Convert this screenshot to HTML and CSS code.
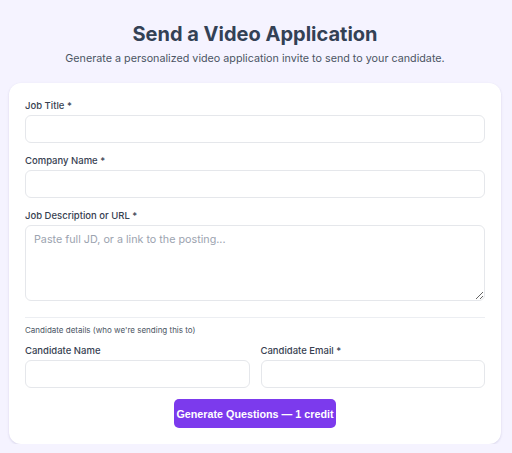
FILE: index.html
```html
<!DOCTYPE html>
<html lang="en">
<head>
<meta charset="utf-8">
<title>Send a Video Application</title>
<link rel="stylesheet" href="styles.css">
</head>
<body>
<main class="page">
  <header class="head">
    <h1 class="title">Send a Video Application</h1>
    <p class="subtitle">Generate a personalized video application invite to send to your candidate.</p>
  </header>
  <form class="card">
    <div class="field">
      <label class="label" for="jt">Job Title *</label>
      <input class="input" id="jt" type="text">
    </div>
    <div class="field">
      <label class="label" for="cn">Company Name *</label>
      <input class="input" id="cn" type="text">
    </div>
    <div class="field">
      <label class="label" for="jd">Job Description or URL *</label>
      <textarea class="input area" id="jd" placeholder="Paste full JD, or a link to the posting..."></textarea>
    </div>
    <hr class="divider">
    <p class="section-note">Candidate details (who we're sending this to)</p>
    <div class="row">
      <div class="field">
        <label class="label" for="cand">Candidate Name</label>
        <input class="input" id="cand" type="text">
      </div>
      <div class="field">
        <label class="label" for="ce">Candidate Email *</label>
        <input class="input" id="ce" type="email">
      </div>
    </div>
    <div class="actions">
      <button class="btn" type="button">Generate Questions — 1 credit</button>
    </div>
  </form>
</main>
</body>
</html>
```
FILE: styles.css
```css
* { box-sizing: border-box; }
html, body { margin: 0; }
body {
  background: #f5f3ff;
  font-family: Inter, "Noto Sans", sans-serif;
  color: #374151;
}
.page {
  padding: 20px 11px 0 9px;
}
.head {
  text-align: center;
  margin-bottom: 15px;
}
.title {
  margin: 0;
  font-size: 20px;
  line-height: 28px;
  font-weight: 700;
  color: #334155;
}
.subtitle {
  margin: 2px 0 0;
  font-size: 10.75px;
  line-height: 18px;
  color: #4b5563;
}
.card {
  background: #fff;
  border-radius: 12px;
  box-shadow: 0 1px 3px rgba(60, 50, 120, 0.10), 0 1px 2px rgba(60, 50, 120, 0.06);
  padding: 16px;
  display: flex;
  flex-direction: column;
  gap: 11px;
}
.field {
  display: flex;
  flex-direction: column;
  min-width: 0;
}
.label {
  font-size: 9.5px;
  line-height: 14px;
  font-weight: 500;
  color: #374151;
  margin-bottom: 2px;
}
.input {
  display: block;
  width: 100%;
  height: 28px;
  border: 1px solid #e5e7eb;
  border-radius: 6px;
  background: #fff;
  font-family: inherit;
  font-size: 10.75px;
  padding: 6px 8px;
  color: #111827;
  outline: none;
}
.area {
  height: 76px;
  resize: vertical;
  line-height: 16px;
  padding-top: 6px;
}
.area::placeholder { color: #9ca3af; }
.divider {
  border: 0;
  border-top: 1px solid #eceef2;
  margin: 5px 0 0;
}
.section-note {
  margin: -5px 0 -3px;
  font-size: 8px;
  line-height: 12px;
  color: #4b5563;
}
.row {
  display: grid;
  grid-template-columns: 1fr 1fr;
  gap: 11px;
}
.actions {
  display: flex;
  justify-content: center;
}
.btn {
  background: #7c3aed;
  color: #fff;
  border: 0;
  border-radius: 5px;
  height: 29px;
  padding: 0 2px;
  font-family: "Liberation Sans", Arial, sans-serif;
  font-weight: 700;
  font-size: 10.75px;
  cursor: pointer;
}
```
